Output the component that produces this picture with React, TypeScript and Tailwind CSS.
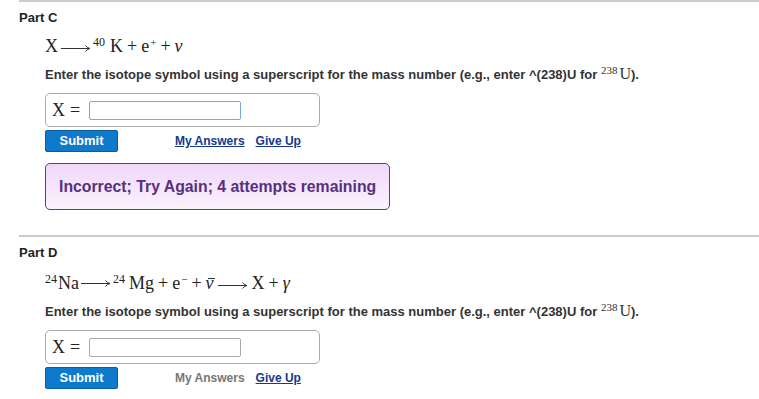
import React from "react";

const SERIF = "font-['Liberation_Serif',serif]";

function Arrow() {
  return (
    <svg width="30" height="10" viewBox="0 0 30 10" className="inline-block mx-[2px]">
      <line x1="0" y1="5.5" x2="28" y2="5.5" stroke="#333" strokeWidth="1" />
      <path d="M24.5 2.5 Q26 4.8 29 5.5 Q26 6.2 24.5 8.5" fill="none" stroke="#333" strokeWidth="1" />
    </svg>
  );
}

function Plus() {
  return <span className="mx-[4px]">+</span>;
}

function Instruction() {
  return (
    <p className="mt-[10px] h-4 leading-4 text-[13px] font-bold text-[#333] whitespace-nowrap">
      Enter the isotope symbol using a superscript for the mass number (e.g., enter ^(238)U for{" "}
      <span className={`${SERIF} font-normal text-[16px]`}>
        <sup className="text-[11px] mr-[2px]">238</sup>U
      </span>
      ).
    </p>
  );
}

function AnswerBox({ focused }: { focused?: boolean }) {
  return (
    <div className="mt-[11px] w-[275px] h-[34px] border border-[#aaa] rounded-[5px] flex items-center px-[6px]">
      <span className={`${SERIF} text-[18px] text-[#222]`}>X</span>
      <span className={`${SERIF} text-[18px] text-[#222] ml-[5px]`}>=</span>
      <input
        type="text"
        className={`ml-[9px] w-[152px] h-[19px] outline-none rounded-[2px] border ${
          focused ? "border-[#7ba4e0]" : "border-[#a9a9a9]"
        }`}
      />
    </div>
  );
}

function Actions({ myAnswersActive }: { myAnswersActive: boolean }) {
  return (
    <div className="flex items-center mt-[3px]">
      <button className="w-[73px] h-[22px] bg-[#0f79cc] border border-[#0c5c9c] rounded-[2px] text-white text-[13px] font-bold">
        Submit
      </button>
      <div className="ml-[57px] flex gap-[11px] text-[12px] font-bold">
        {myAnswersActive ? (
          <a className="underline text-[#123a8e]">My Answers</a>
        ) : (
          <span className="text-[#777]">My Answers</span>
        )}
        <a className="underline text-[#123a8e]">Give Up</a>
      </div>
    </div>
  );
}

export default function App() {
  return (
    <div className="bg-white w-[759px] h-[399px] overflow-hidden font-['Liberation_Sans',Arial,sans-serif] text-[#333]">
      {/* Part C */}
      <section className="ml-[19px] border-t-2 border-[#cccccc]">
        <h3 className="mt-[8px] h-4 leading-4 text-[13px] font-bold text-[#222]">Part C</h3>
        <div className="pl-[26px]">
          <div className={`${SERIF} mt-[10px] h-5 leading-5 text-[18px] text-[#222] flex items-center`}>
            <span>X</span>
            <span className="ml-[1px]">
              <Arrow />
            </span>
            <span className="text-[12px] -mt-[8px]">40</span>
            <span className="ml-[5px]">K</span>
            <Plus />
            <span>e</span>
            <span className="text-[11px] -mt-[9px] ml-[1px]">+</span>
            <Plus />
            <span className="italic">ν</span>
          </div>
          <Instruction />
          <AnswerBox focused />
          <Actions myAnswersActive />
          <div className="mt-[11px] w-[345px] h-[47px] border border-[#6f2f90] rounded-[5px] bg-gradient-to-b from-[#efd7f9] to-[#fcf2fe] flex items-center px-[13px]">
            <span className="text-[15.8px] font-bold text-[#56307f] whitespace-nowrap">
              Incorrect; Try Again; 4 attempts remaining
            </span>
          </div>
        </div>
      </section>

      {/* Part D */}
      <section className="ml-[19px] mt-[25px] border-t-2 border-[#cccccc]">
        <h3 className="mt-[8px] h-4 leading-4 text-[13px] font-bold text-[#222]">Part D</h3>
        <div className="pl-[26px]">
          <div className={`${SERIF} mt-[12px] h-5 leading-5 text-[18px] text-[#222] flex items-center`}>
            <span className="text-[12px] -mt-[8px] mr-[1px]">24</span>
            <span>Na</span>
            <Arrow />
            <span className="text-[12px] -mt-[8px]">24</span>
            <span className="ml-[4px]">Mg</span>
            <Plus />
            <span>e</span>
            <span className="text-[11px] -mt-[9px] ml-[1px]">−</span>
            <Plus />
            <span className="relative italic">
              ν
              <span className="absolute left-[2px] top-[5px] w-[7px] h-px bg-[#333]" />
            </span>
            <span className="ml-[2px]">
              <Arrow />
            </span>
            <span className="ml-[2px]">X</span>
            <Plus />
            <span className="italic">γ</span>
          </div>
          <Instruction />
          <AnswerBox />
          <Actions myAnswersActive={false} />
        </div>
      </section>
    </div>
  );
}
